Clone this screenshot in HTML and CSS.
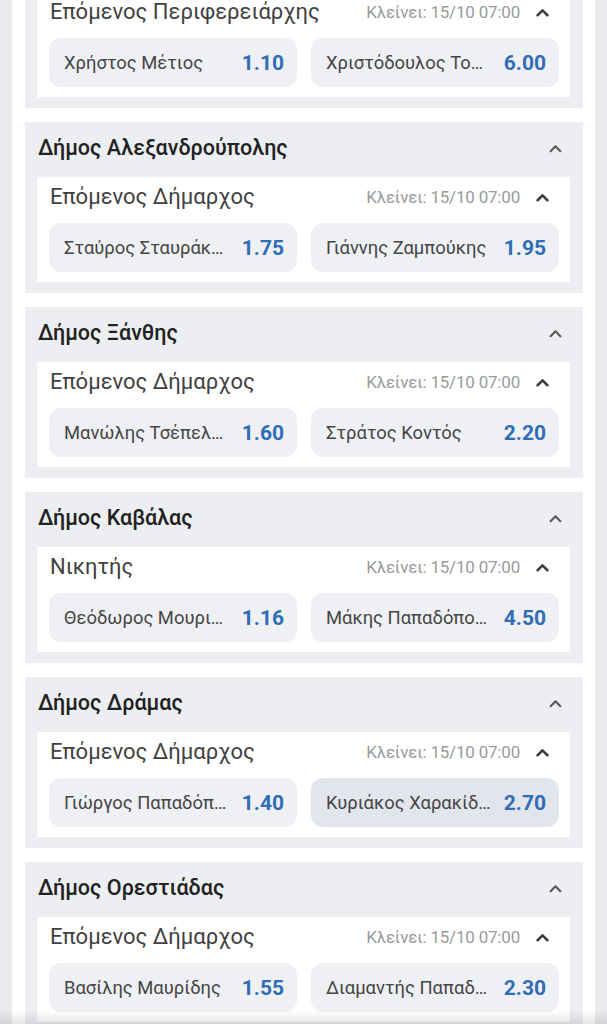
FILE: index.html
```html
<!DOCTYPE html>
<html lang="el">
<head>
<meta charset="utf-8">
<title>Αγορές</title>
<link rel="stylesheet" href="styles.css">
</head>
<body>
<div class="page">
  <div class="list">

    <section class="card card--clipped">
      <div class="market">
        <div class="market-head">
          <span class="market-name">Επόμενος Περιφερειάρχης</span>
          <span class="market-close">Κλείνει: 15/10 07:00</span>
          <svg class="chev chev--inner" viewBox="0 0 12 8"><polyline points="1.5,6.5 6,2 10.5,6.5"/></svg>
        </div>
        <div class="odds">
          <button class="odd"><span class="odd-name">Χρήστος Μέτιος</span><span class="odd-val">1.10</span></button>
          <button class="odd"><span class="odd-name">Χριστόδουλος Το…</span><span class="odd-val">6.00</span></button>
        </div>
      </div>
    </section>

    <section class="card">
      <div class="card-head">
        <h2 class="card-title">Δήμος Αλεξανδρούπολης</h2>
        <svg class="chev chev--head" viewBox="0 0 12 8"><polyline points="1.5,6.5 6,2 10.5,6.5"/></svg>
      </div>
      <div class="market">
        <div class="market-head">
          <span class="market-name">Επόμενος Δήμαρχος</span>
          <span class="market-close">Κλείνει: 15/10 07:00</span>
          <svg class="chev chev--inner" viewBox="0 0 12 8"><polyline points="1.5,6.5 6,2 10.5,6.5"/></svg>
        </div>
        <div class="odds">
          <button class="odd"><span class="odd-name">Σταύρος Σταυράκ…</span><span class="odd-val">1.75</span></button>
          <button class="odd"><span class="odd-name">Γιάννης Ζαμπούκης</span><span class="odd-val">1.95</span></button>
        </div>
      </div>
    </section>

    <section class="card">
      <div class="card-head">
        <h2 class="card-title">Δήμος Ξάνθης</h2>
        <svg class="chev chev--head" viewBox="0 0 12 8"><polyline points="1.5,6.5 6,2 10.5,6.5"/></svg>
      </div>
      <div class="market">
        <div class="market-head">
          <span class="market-name">Επόμενος Δήμαρχος</span>
          <span class="market-close">Κλείνει: 15/10 07:00</span>
          <svg class="chev chev--inner" viewBox="0 0 12 8"><polyline points="1.5,6.5 6,2 10.5,6.5"/></svg>
        </div>
        <div class="odds">
          <button class="odd"><span class="odd-name">Μανώλης Τσέπελ…</span><span class="odd-val">1.60</span></button>
          <button class="odd"><span class="odd-name">Στράτος Κοντός</span><span class="odd-val">2.20</span></button>
        </div>
      </div>
    </section>

    <section class="card">
      <div class="card-head">
        <h2 class="card-title">Δήμος Καβάλας</h2>
        <svg class="chev chev--head" viewBox="0 0 12 8"><polyline points="1.5,6.5 6,2 10.5,6.5"/></svg>
      </div>
      <div class="market">
        <div class="market-head">
          <span class="market-name">Νικητής</span>
          <span class="market-close">Κλείνει: 15/10 07:00</span>
          <svg class="chev chev--inner" viewBox="0 0 12 8"><polyline points="1.5,6.5 6,2 10.5,6.5"/></svg>
        </div>
        <div class="odds">
          <button class="odd"><span class="odd-name">Θεόδωρος Μουρι…</span><span class="odd-val">1.16</span></button>
          <button class="odd"><span class="odd-name">Μάκης Παπαδόπο…</span><span class="odd-val">4.50</span></button>
        </div>
      </div>
    </section>

    <section class="card">
      <div class="card-head">
        <h2 class="card-title">Δήμος Δράμας</h2>
        <svg class="chev chev--head" viewBox="0 0 12 8"><polyline points="1.5,6.5 6,2 10.5,6.5"/></svg>
      </div>
      <div class="market">
        <div class="market-head">
          <span class="market-name">Επόμενος Δήμαρχος</span>
          <span class="market-close">Κλείνει: 15/10 07:00</span>
          <svg class="chev chev--inner" viewBox="0 0 12 8"><polyline points="1.5,6.5 6,2 10.5,6.5"/></svg>
        </div>
        <div class="odds">
          <button class="odd"><span class="odd-name">Γιώργος Παπαδόπ…</span><span class="odd-val">1.40</span></button>
          <button class="odd odd--active"><span class="odd-name">Κυριάκος Χαρακίδ…</span><span class="odd-val">2.70</span></button>
        </div>
      </div>
    </section>

    <section class="card">
      <div class="card-head">
        <h2 class="card-title">Δήμος Ορεστιάδας</h2>
        <svg class="chev chev--head" viewBox="0 0 12 8"><polyline points="1.5,6.5 6,2 10.5,6.5"/></svg>
      </div>
      <div class="market">
        <div class="market-head">
          <span class="market-name">Επόμενος Δήμαρχος</span>
          <span class="market-close">Κλείνει: 15/10 07:00</span>
          <svg class="chev chev--inner" viewBox="0 0 12 8"><polyline points="1.5,6.5 6,2 10.5,6.5"/></svg>
        </div>
        <div class="odds">
          <button class="odd"><span class="odd-name">Βασίλης Μαυρίδης</span><span class="odd-val">1.55</span></button>
          <button class="odd"><span class="odd-name">Διαμαντής Παπαδ…</span><span class="odd-val">2.30</span></button>
        </div>
      </div>
    </section>

  </div>
</div>
<div class="bottom-shade"></div>
</body>
</html>
```

FILE: styles.css
```css
* { box-sizing: border-box; }

html, body {
  margin: 0;
  padding: 0;
  height: 1024px;
  overflow: hidden;
}

body {
  background: #e9ebee;
  font-family: Roboto, "Noto Sans", "Liberation Sans", sans-serif;
  color: #333;
}

.page {
  margin: 0 12px;
  width: 583px;
  min-height: 1100px;
  background: #ffffff;
  padding: 0 12px 0 13px;
}

.list {
  display: flex;
  flex-direction: column;
  gap: 14px;
}

.card {
  background: #eceef1;
  padding: 0 13px 11px 12px;
}

.card--clipped {
  margin-top: -8px;
}

.card-head {
  display: flex;
  align-items: center;
  height: 55px;
  padding: 0 8px 3px 1px;
}

.card-title {
  flex: 1;
  margin: 0;
  font-family: "Roboto Medium", Roboto, "Noto Sans", sans-serif;
  font-size: 21.5px;
  font-weight: 500;
  color: #222222;
  line-height: 24px;
}

.chev {
  display: block;
  fill: none;
  stroke-linecap: round;
  stroke-linejoin: round;
}

.chev--head {
  width: 13px;
  height: 9px;
  stroke: #5a5a5a;
  stroke-width: 2;
}

.chev--inner {
  width: 13px;
  height: 9px;
  stroke: #3e3e3e;
  stroke-width: 2.4;
  margin-left: 16px;
}

.market {
  background: #ffffff;
  padding: 8px 11px 10px 12px;
}

.market-head {
  display: flex;
  align-items: center;
  height: 24px;
  padding: 0 10px 0 1px;
}

.market-name {
  flex: 1;
  font-size: 22px;
  color: #414141;
  line-height: 24px;
}

.market-close {
  font-size: 17px;
  letter-spacing: -0.2px;
  color: #9a9a9a;
  line-height: 20px;
}

.odds {
  display: grid;
  grid-template-columns: 1fr 1fr;
  gap: 14px;
  margin-top: 14px;
}

.odd {
  display: flex;
  align-items: center;
  justify-content: space-between;
  gap: 8px;
  height: 49px;
  padding: 0 13px 0 15px;
  border: 0;
  border-radius: 12px;
  background: #eef0f3;
  font-family: inherit;
  cursor: pointer;
  min-width: 0;
}

.odd--active {
  background: #e3e5ec;
}

.odd-name {
  font-size: 18.4px;
  color: #454545;
  white-space: nowrap;
  overflow: hidden;
  text-overflow: ellipsis;
  min-width: 0;
}

.odd-val {
  font-size: 21px;
  font-weight: 700;
  color: #2f6db6;
  flex-shrink: 0;
}

.bottom-shade {
  position: fixed;
  left: 0;
  right: 0;
  bottom: 0;
  height: 14px;
  background: linear-gradient(to bottom, rgba(0,0,0,0), rgba(0,0,0,0.1));
  pointer-events: none;
}
```
